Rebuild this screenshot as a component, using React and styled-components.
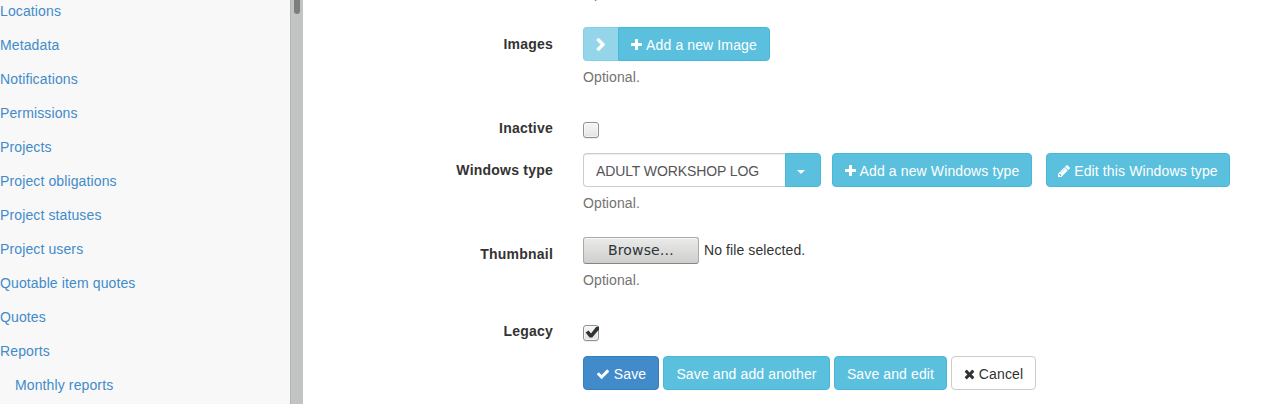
import React from 'react';
import styled, { createGlobalStyle, css } from 'styled-components';

const GlobalStyle = createGlobalStyle`
  *, *::before, *::after { box-sizing: border-box; }
  body {
    margin: 0;
    background: #fff;
    color: #333;
    font: 14px/20px "Liberation Sans", Arial, sans-serif;
    letter-spacing: 0.1px;
  }
`;

const Page = styled.div`
  display: flex;
  height: 404px;
  overflow: hidden;
`;

const Sidebar = styled.nav`
  width: 290px;
  flex: none;
  margin-top: -6px;
  background: #f8f8f8;
`;

const NavLink = styled.a`
  display: block;
  height: 34px;
  padding: 7px 0 7px ${(p) => (p.$nested ? 15 : 0)}px;
  color: #428bca;
  letter-spacing: 0.12px;
  text-decoration: none;
  white-space: nowrap;
`;

const ScrollTrack = styled.div`
  flex: none;
  width: 13px;
  padding-left: 3px;
  border-left: 1px solid #b3b5b4;
  background: #c2c4c3;
`;

const ScrollThumb = styled.div`
  width: 6px;
  height: 14px;
  border-radius: 0 0 3px 3px;
  background: #7a7e7e;
`;

const Form = styled.form`
  flex: 1;
  margin-top: -57px;
`;

const FormRow = styled.div`
  display: flex;
  height: ${(p) => p.$height}px;
`;

const Label = styled.label`
  flex: none;
  width: 250px;
  margin-right: 30px;
  padding-top: 7px;
  font-weight: bold;
  letter-spacing: 0.22px;
  text-align: right;
`;

const Field = styled.div`
  flex: 1;
  padding-top: ${(p) => p.$offset || 0}px;
`;

const Controls = styled.div`
  display: flex;
  align-items: stretch;
  gap: ${(p) => p.$gap || 0}px;
`;

const Help = styled.p`
  margin: 6px 0 0;
  color: #737373;
`;

const tones = {
  info: css`
    color: #fff;
    background: #5bc0de;
    border-color: #46b8da;
  `,
  primary: css`
    color: #fff;
    background: #428bca;
    border-color: #357ebd;
  `,
  plain: css`
    color: #333;
    background: #fff;
    border-color: #ccc;
  `,
};

const Button = styled.button`
  display: flex;
  align-items: center;
  justify-content: center;
  gap: 4px;
  flex: none;
  width: ${(p) => p.$width}px;
  height: 34px;
  padding: 2px 0 0;
  margin-left: ${(p) => p.$space || 0}px;
  border: 1px solid;
  border-radius: ${(p) => p.$radius || '4px'};
  font: inherit;
  letter-spacing: 0.12px;
  white-space: nowrap;
  ${(p) => tones[p.$tone || 'info']}
`;

const FadedButton = styled(Button)`
  width: 35px;
  border-right: 0;
  opacity: 0.65;

  svg {
    stroke: currentColor;
    stroke-width: 90;
  }
`;

const TextInput = styled.input`
  width: 202px;
  height: 34px;
  padding: 7px 12px 5px;
  border: 1px solid #ccc;
  border-right: 0;
  border-radius: 4px 0 0 4px;
  outline: 0;
  color: #555;
  font: inherit;
  letter-spacing: -0.11px;
  box-shadow: inset 0 1px 1px rgba(0, 0, 0, 0.075);
`;

const Caret = styled.span`
  margin: 2px 4px 0 0;
  border: 4px solid transparent;
  border-top-color: #fff;
  border-bottom: 0;
`;

const CheckBox = styled.span`
  display: block;
  width: 16px;
  height: 16px;
  border: 1px solid #8f918e;
  border-radius: 3px;
  background: linear-gradient(#f6f6f6, #e3e4e2);
  box-shadow: inset 0 0 0 1px rgba(255, 255, 255, 0.5), 0 1px 0 #eee;
`;

const Tick = styled.svg`
  display: block;
  width: 16px;
  height: 16px;
  margin: -1px;
  overflow: visible;
`;

const BrowseButton = styled.button`
  width: 116px;
  height: 27px;
  padding: 0 0 1px;
  border: 1px solid #a9aba8;
  border-bottom-color: #858784;
  border-radius: 3px;
  background: linear-gradient(#ebebea, #cecfcd);
  box-shadow: inset 0 1px 0 #f8f8f8;
  color: #2e3436;
  font: 14px/20px "DejaVu Sans", sans-serif;
  letter-spacing: 0.15px;
`;

const FileName = styled.span`
  padding-top: 3px;
`;

const Glyph = styled.svg`
  flex: none;
  width: ${(p) => p.$width}px;
  height: 14px;
  fill: currentColor;
`;

const icons = {
  plus: {
    w: 11,
    box: '192 0 1408 1792',
    d: 'M1600 736v192q0 40-28 68t-68 28h-416v416q0 40-28 68t-68 28h-192q-40 0-68-28t-28-68v-416h-416q-40 0-68-28t-28-68v-192q0-40 28-68t68-28h416v-416q0-40 28-68t68-28h192q40 0 68 28t28 68v416h416q40 0 68 28t28 68z',
  },
  check: {
    w: 14,
    box: '0 0 1792 1792',
    d: 'M1671 566q0 40-28 68l-724 724-136 136q-28 28-68 28t-68-28l-136-136-362-362q-28-28-28-68t28-68l136-136q28-28 68-28t68 28l294 295 656-657q28-28 68-28t68 28l136 136q28 28 28 68z',
  },
  times: {
    w: 11,
    box: '192 0 1408 1792',
    d: 'M1490 1322q0 40-28 68l-136 136q-28 28-68 28t-68-28l-294-294-294 294q-28 28-68 28t-68-28l-136-136q-28-28-28-68t28-68l294-294-294-294q-28-28-28-68t28-68l136-136q28-28 68-28t68 28l294 294 294-294q28-28 68-28t68 28l136 136q28 28 28 68t-28 68l-294 294 294 294q28 28 28 68z',
  },
  chevron: {
    w: 10,
    box: '256 0 1280 1792',
    d: 'M1363 877l-742 742q-19 19-45 19t-45-19l-166-166q-19-19-19-45t19-45l531-531-531-531q-19-19-19-45t19-45l166-166q19-19 45-19t45 19l742 742q19 19 19 45t-19 45z',
  },
  pencil: {
    w: 12,
    box: '128 0 1536 1792',
    d: 'M491 1536l91-91-235-235-91 91v107h128v128h107zm523-928q0-22-22-22-10 0-17 7l-542 542q-7 7-7 17 0 22 22 22 10 0 17-7l542-542q7-7 7-17zm-54-192l416 416-832 832h-416v-416zm683 96q0 53-37 90l-166 166-416-416 166-165q36-38 90-38 53 0 91 38l235 234q37 39 37 91z',
  },
};

function Icon({ name }) {
  const { w, box, d } = icons[name];
  return (
    <Glyph $width={w} viewBox={box} aria-hidden="true">
      <path d={d} />
    </Glyph>
  );
}

const links = [
  'Locations',
  'Metadata',
  'Notifications',
  'Permissions',
  'Projects',
  'Project obligations',
  'Project statuses',
  'Project users',
  'Quotable item quotes',
  'Quotes',
  'Reports',
];

export default function App() {
  return (
    <>
      <GlobalStyle />
      <Page>
        <Sidebar>
          {links.map((link) => (
            <NavLink key={link}>{link}</NavLink>
          ))}
          <NavLink $nested>Monthly reports</NavLink>
        </Sidebar>
        <ScrollTrack>
          <ScrollThumb />
        </ScrollTrack>
        <Form>
          <FormRow $height={84}>
            <Label />
            <Field $offset={34}>
              <Help>Optional.</Help>
            </Field>
          </FormRow>
          <FormRow $height={84}>
            <Label>Images</Label>
            <Field>
              <Controls>
                <FadedButton type="button" $radius="4px 0 0 4px">
                  <Icon name="chevron" />
                </FadedButton>
                <Button type="button" $width={152} $radius="0 4px 4px 0">
                  <Icon name="plus" />
                  Add a new Image
                </Button>
              </Controls>
              <Help>Optional.</Help>
            </Field>
          </FormRow>
          <FormRow $height={42}>
            <Label>Inactive</Label>
            <Field $offset={11}>
              <CheckBox role="checkbox" aria-checked="false" />
            </Field>
          </FormRow>
          <FormRow $height={84}>
            <Label>Windows type</Label>
            <Field>
              <Controls>
                <TextInput defaultValue="ADULT WORKSHOP LOG" />
                <Button type="button" $width={36} $radius="0 4px 4px 0">
                  <Caret />
                </Button>
                <Button type="button" $width={200} $space={11}>
                  <Icon name="plus" />
                  Add a new Windows type
                </Button>
                <Button type="button" $width={184} $space={14}>
                  <Icon name="pencil" />
                  Edit this Windows type
                </Button>
              </Controls>
              <Help>Optional.</Help>
            </Field>
          </FormRow>
          <FormRow $height={77}>
            <Label>Thumbnail</Label>
            <Field>
              <Controls $gap={5}>
                <BrowseButton type="button">Browse…</BrowseButton>
                <FileName>No file selected.</FileName>
              </Controls>
              <Help>Optional.</Help>
            </Field>
          </FormRow>
          <FormRow $height={42}>
            <Label>Legacy</Label>
            <Field $offset={11}>
              <CheckBox role="checkbox" aria-checked="true">
                <Tick viewBox="0 0 16 16">
                  <path d="M2.6 7.4 5.6 5.6 8 8.4 13 2 16 1.4V4.6L9.2 12.6H6.6Z" fill="#2e3436" />
                </Tick>
              </CheckBox>
            </Field>
          </FormRow>
          <FormRow $height={34}>
            <Label />
            <Controls $gap={4}>
              <Button type="button" $tone="primary" $width={76}>
                <Icon name="check" />
                Save
              </Button>
              <Button type="button" $width={167}>Save and add another</Button>
              <Button type="button" $width={113}>Save and edit</Button>
              <Button type="button" $tone="plain" $width={85}>
                <Icon name="times" />
                Cancel
              </Button>
            </Controls>
          </FormRow>
        </Form>
      </Page>
    </>
  );
}
